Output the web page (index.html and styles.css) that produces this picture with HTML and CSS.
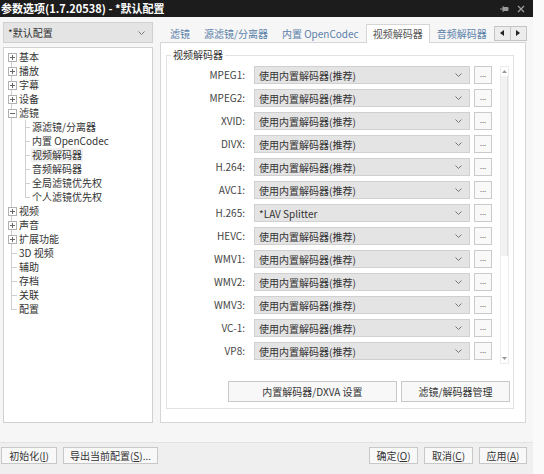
FILE: index.html
```html
<!DOCTYPE html>
<html lang="zh-CN">
<head>
    <meta charset="UTF-8">
    <meta name="viewport" content="width=device-width, initial-scale=1.0">
    <title>参数选项</title>
    <link rel="stylesheet" href="styles.css">
</head>
<body>
<div class="window">
    <div class="titlebar">
        <span class="title">参数选项(1.7.20538) - *默认配置</span>
        <span class="title-icons">
            <svg width="9" height="8" viewBox="0 0 9 8"><path d="M0 4h3M3 1v6M3 2.5h5v3H3" stroke="#9a9a9a" fill="#9a9a9a" stroke-width="1"/></svg>
            <svg width="8" height="8" viewBox="0 0 8 8"><path d="M1 1l6 6M7 1l-6 6" stroke="#a0a0a0" stroke-width="1.2"/></svg>
        </span>
    </div>

    <div class="main">
        <div class="sidebar">
            <div class="combo profile">
                <span>*默认配置</span>
                <svg width="7" height="4" viewBox="0 0 7 4"><path d="M0.5 0.5L3.5 3.5L6.5 0.5" stroke="#777" fill="none"/></svg>
            </div>
            <div class="tree">
                <div class="node first"><span class="gut exp"><svg width="9" height="9" viewBox="0 0 9 9"><rect x="0.5" y="0.5" width="8" height="8" fill="#fff" stroke="#b0b0b0"/><path d="M2 4.5h5M4.5 2v5" stroke="#666"/></svg></span>基本</div>
                <div class="node"><span class="gut exp"><svg width="9" height="9" viewBox="0 0 9 9"><rect x="0.5" y="0.5" width="8" height="8" fill="#fff" stroke="#b0b0b0"/><path d="M2 4.5h5M4.5 2v5" stroke="#666"/></svg></span>播放</div>
                <div class="node"><span class="gut exp"><svg width="9" height="9" viewBox="0 0 9 9"><rect x="0.5" y="0.5" width="8" height="8" fill="#fff" stroke="#b0b0b0"/><path d="M2 4.5h5M4.5 2v5" stroke="#666"/></svg></span>字幕</div>
                <div class="node"><span class="gut exp"><svg width="9" height="9" viewBox="0 0 9 9"><rect x="0.5" y="0.5" width="8" height="8" fill="#fff" stroke="#b0b0b0"/><path d="M2 4.5h5M4.5 2v5" stroke="#666"/></svg></span>设备</div>
                <div class="node"><span class="gut exp"><svg width="9" height="9" viewBox="0 0 9 9"><rect x="0.5" y="0.5" width="8" height="8" fill="#fff" stroke="#b0b0b0"/><path d="M2 4.5h5" stroke="#666"/></svg></span>滤镜</div>
                <div class="node"><span class="gut"></span><span class="gut2 cfirst"></span>源滤镜/分离器</div>
                <div class="node"><span class="gut"></span><span class="gut2"></span>内置 OpenCodec</div>
                <div class="node"><span class="gut"></span><span class="gut2"></span><span class="sel">视频解码器</span></div>
                <div class="node"><span class="gut"></span><span class="gut2"></span>音频解码器</div>
                <div class="node"><span class="gut"></span><span class="gut2"></span>全局滤镜优先权</div>
                <div class="node"><span class="gut"></span><span class="gut2 clast"></span>个人滤镜优先权</div>
                <div class="node"><span class="gut exp"><svg width="9" height="9" viewBox="0 0 9 9"><rect x="0.5" y="0.5" width="8" height="8" fill="#fff" stroke="#b0b0b0"/><path d="M2 4.5h5M4.5 2v5" stroke="#666"/></svg></span>视频</div>
                <div class="node"><span class="gut exp"><svg width="9" height="9" viewBox="0 0 9 9"><rect x="0.5" y="0.5" width="8" height="8" fill="#fff" stroke="#b0b0b0"/><path d="M2 4.5h5M4.5 2v5" stroke="#666"/></svg></span>声音</div>
                <div class="node"><span class="gut exp"><svg width="9" height="9" viewBox="0 0 9 9"><rect x="0.5" y="0.5" width="8" height="8" fill="#fff" stroke="#b0b0b0"/><path d="M2 4.5h5M4.5 2v5" stroke="#666"/></svg></span>扩展功能</div>
                <div class="node"><span class="gut tick"></span>3D 视频</div>
                <div class="node"><span class="gut tick"></span>辅助</div>
                <div class="node"><span class="gut tick"></span>存档</div>
                <div class="node"><span class="gut tick"></span>关联</div>
                <div class="node last"><span class="gut tick"></span>配置</div>
            </div>
        </div>

        <div class="content">
            <div class="tabs">
                <span class="tab">滤镜</span>
                <span class="tab">源滤镜/分离器</span>
                <span class="tab">内置 OpenCodec</span>
                <span class="tab active">视频解码器</span>
                <span class="tab">音频解码器</span>
                <span class="tab-scroll">
                    <span class="arrow-btn"><svg width="4" height="6" viewBox="0 0 4 6"><path d="M4 0v6L0 3z" fill="#222"/></svg></span>
                    <span class="arrow-btn"><svg width="4" height="6" viewBox="0 0 4 6"><path d="M0 0v6l4-3z" fill="#222"/></svg></span>
                </span>
            </div>
            <div class="panel">
                <fieldset class="group">
                    <legend>视频解码器</legend>
                    <div class="list">
                        <div class="rows">
                            <label>MPEG1:</label><div class="combo"><span>使用内置解码器(推荐)</span><svg width="7" height="4" viewBox="0 0 7 4"><path d="M0.5 0.5L3.5 3.5L6.5 0.5" stroke="#777" fill="none"/></svg></div><span class="more">...</span>
                            <label>MPEG2:</label><div class="combo"><span>使用内置解码器(推荐)</span><svg width="7" height="4" viewBox="0 0 7 4"><path d="M0.5 0.5L3.5 3.5L6.5 0.5" stroke="#777" fill="none"/></svg></div><span class="more">...</span>
                            <label>XVID:</label><div class="combo"><span>使用内置解码器(推荐)</span><svg width="7" height="4" viewBox="0 0 7 4"><path d="M0.5 0.5L3.5 3.5L6.5 0.5" stroke="#777" fill="none"/></svg></div><span class="more">...</span>
                            <label>DIVX:</label><div class="combo"><span>使用内置解码器(推荐)</span><svg width="7" height="4" viewBox="0 0 7 4"><path d="M0.5 0.5L3.5 3.5L6.5 0.5" stroke="#777" fill="none"/></svg></div><span class="more">...</span>
                            <label>H.264:</label><div class="combo"><span>使用内置解码器(推荐)</span><svg width="7" height="4" viewBox="0 0 7 4"><path d="M0.5 0.5L3.5 3.5L6.5 0.5" stroke="#777" fill="none"/></svg></div><span class="more">...</span>
                            <label>AVC1:</label><div class="combo"><span>使用内置解码器(推荐)</span><svg width="7" height="4" viewBox="0 0 7 4"><path d="M0.5 0.5L3.5 3.5L6.5 0.5" stroke="#777" fill="none"/></svg></div><span class="more">...</span>
                            <label>H.265:</label><div class="combo"><span>*LAV Splitter</span><svg width="7" height="4" viewBox="0 0 7 4"><path d="M0.5 0.5L3.5 3.5L6.5 0.5" stroke="#777" fill="none"/></svg></div><span class="more">...</span>
                            <label>HEVC:</label><div class="combo"><span>使用内置解码器(推荐)</span><svg width="7" height="4" viewBox="0 0 7 4"><path d="M0.5 0.5L3.5 3.5L6.5 0.5" stroke="#777" fill="none"/></svg></div><span class="more">...</span>
                            <label>WMV1:</label><div class="combo"><span>使用内置解码器(推荐)</span><svg width="7" height="4" viewBox="0 0 7 4"><path d="M0.5 0.5L3.5 3.5L6.5 0.5" stroke="#777" fill="none"/></svg></div><span class="more">...</span>
                            <label>WMV2:</label><div class="combo"><span>使用内置解码器(推荐)</span><svg width="7" height="4" viewBox="0 0 7 4"><path d="M0.5 0.5L3.5 3.5L6.5 0.5" stroke="#777" fill="none"/></svg></div><span class="more">...</span>
                            <label>WMV3:</label><div class="combo"><span>使用内置解码器(推荐)</span><svg width="7" height="4" viewBox="0 0 7 4"><path d="M0.5 0.5L3.5 3.5L6.5 0.5" stroke="#777" fill="none"/></svg></div><span class="more">...</span>
                            <label>VC-1:</label><div class="combo"><span>使用内置解码器(推荐)</span><svg width="7" height="4" viewBox="0 0 7 4"><path d="M0.5 0.5L3.5 3.5L6.5 0.5" stroke="#777" fill="none"/></svg></div><span class="more">...</span>
                            <label>VP8:</label><div class="combo"><span>使用内置解码器(推荐)</span><svg width="7" height="4" viewBox="0 0 7 4"><path d="M0.5 0.5L3.5 3.5L6.5 0.5" stroke="#777" fill="none"/></svg></div><span class="more">...</span>
                        </div>
                        <div class="vscroll">
                            <span class="sb-arrow"><svg width="5" height="3" viewBox="0 0 5 3"><path d="M0 3L2.5 0L5 3z" fill="#999"/></svg></span>
                            <span class="sb-thumb"></span>
                            <span class="sb-track"></span>
                            <span class="sb-arrow"><svg width="5" height="3" viewBox="0 0 5 3"><path d="M0 0L2.5 3L5 0z" fill="#999"/></svg></span>
                        </div>
                    </div>
                    <div class="group-actions">
                        <button class="btn wide">内置解码器/DXVA 设置</button>
                        <button class="btn mid">滤镜/解码器管理</button>
                    </div>
                </fieldset>
            </div>
        </div>
    </div>

    <div class="footer">
        <button class="btn w56">初始化(<u>I</u>)</button>
        <button class="btn w95">导出当前配置(<u>S</u>)...</button>
        <span class="spacer"></span>
        <button class="btn w49">确定(<u>O</u>)</button>
        <button class="btn w49">取消(<u>C</u>)</button>
        <button class="btn w48">应用(<u>A</u>)</button>
    </div>
</div>
</body>
</html>
```

FILE: styles.css
```css
body {
    margin: 0;
    background-color: #fafafa;
    font-family: "Noto Sans CJK SC", "Noto Sans", sans-serif;
    font-size: 10px;
    color: #333;
}
.window {
    width: 533px;
    height: 474px;
    display: flex;
    flex-direction: column;
    background-color: #f6f6f6;
}
.titlebar {
    height: 17px;
    flex: none;
    display: flex;
    align-items: center;
    justify-content: space-between;
    padding: 0 8px 0 1px;
    background-color: #1c1c1c;
    color: #fff;
}
.title {
    font-size: 11px;
    font-weight: bold;
    line-height: 17px;
}
.title-icons {
    display: flex;
    align-items: center;
    gap: 8px;
}
.main {
    flex: 1;
    min-height: 0;
    display: flex;
    gap: 7px;
    padding: 5px 7px 19px 3px;
}
.sidebar {
    width: 150px;
    display: flex;
    flex-direction: column;
    gap: 4px;
}
.combo {
    display: flex;
    align-items: center;
    justify-content: space-between;
    box-sizing: border-box;
    padding: 0 7px 0 4px;
    background-color: #e4e4e4;
    border: 1px solid #d0d0d0;
    color: #333;
    white-space: nowrap;
}
.profile {
    height: 21px;
    flex: none;
}

/* tree */
.tree {
    flex: 1;
    background-color: #fff;
    border: 1px solid #d0d0d0;
    padding-top: 2px;
    line-height: 14px;
    color: #333;
}
.node {
    display: flex;
    align-items: center;
    height: 14px;
    white-space: nowrap;
}
.gut, .gut2 {
    position: relative;
    flex: none;
    height: 14px;
}
.gut { width: 15px; }
.gut2 { width: 13px; }
.gut::before {
    content: "";
    position: absolute;
    left: 7px;
    top: 0;
    bottom: 0;
    border-left: 1px solid #cfcfcf;
}
.first .gut::before { top: 7px; }
.last .gut::before { bottom: 7px; }
.tick::after {
    content: "";
    position: absolute;
    left: 7px;
    top: 7px;
    width: 6px;
    border-top: 1px solid #cfcfcf;
}
.gut2::before {
    content: "";
    position: absolute;
    left: 6px;
    top: 0;
    bottom: 0;
    border-left: 1px solid #cfcfcf;
}
.gut2::after {
    content: "";
    position: absolute;
    left: 6px;
    top: 7px;
    width: 5px;
    border-top: 1px solid #cfcfcf;
}
.gut2.clast::before { bottom: 7px; }
.exp {
    display: flex;
    align-items: center;
    justify-content: center;
}
.exp svg {
    position: relative;
    margin-left: 1px;
}
.sel {
    background-color: #f1f1f1;
    padding: 0 1px;
    margin-left: -1px;
}

/* tabs */
.content {
    width: 366px;
    display: flex;
    flex-direction: column;
}
.tabs {
    height: 20px;
    flex: none;
    display: flex;
    align-items: flex-end;
    padding-left: 3px;
}
.tab {
    height: 17px;
    line-height: 17px;
    padding: 0 7px;
    color: #5a7fa9;
    white-space: nowrap;
}
.tab.active {
    position: relative;
    z-index: 1;
    height: 18px;
    margin-bottom: -1px;
    padding: 0 6px;
    background-color: #fff;
    border: 1px solid #d6d6d6;
    border-bottom: none;
    color: #555;
}
.tab-scroll {
    margin-left: auto;
    align-self: center;
    display: flex;
    margin-top: 2px;
}
.arrow-btn {
    width: 15px;
    height: 13px;
    display: flex;
    align-items: center;
    justify-content: center;
    background-color: #ececec;
    border: 1px solid #c4c4c4;
}
.arrow-btn + .arrow-btn { border-left: none; }
.panel {
    flex: 1;
    background-color: #fff;
    border: 1px solid #d6d6d6;
}

/* group box */
.group {
    width: 348px;
    box-sizing: border-box;
    margin: 5px 0 0 5px;
    padding: 4px 0 6px 0;
    border: 1px solid #e2e2e2;
    min-width: 0;
}
.group legend {
    margin-left: 4px;
    padding: 0 2px;
    line-height: 14px;
    color: #333;
}
.list {
    display: flex;
    align-items: flex-start;
}
.rows {
    display: grid;
    grid-template-columns: 83px 216px 18px;
    grid-auto-rows: 18px;
    column-gap: 4px;
    row-gap: 5px;
}
.rows label {
    text-align: right;
    line-height: 18px;
    padding-right: 5px;
    color: #444;
}
.more {
    box-sizing: border-box;
    height: 18px;
    line-height: 13px;
    text-align: center;
    background-color: #f9f9f9;
    border: 1px solid #cacaca;
    color: #666;
    font-size: 8px;
}
.vscroll {
    width: 7px;
    height: 296px;
    margin-left: 8px;
    display: flex;
    flex-direction: column;
    border: 1px solid #ececec;
}
.sb-arrow {
    height: 9px;
    flex: none;
    display: flex;
    align-items: center;
    justify-content: center;
}
.sb-thumb {
    height: 180px;
    flex: none;
    background-color: #f2f2f2;
    border-right: 1px solid #e0e0e0;
}
.sb-track { flex: 1; }
.group-actions {
    display: flex;
    justify-content: flex-end;
    gap: 4px;
    margin-top: 17px;
    padding-right: 3px;
}

/* buttons */
.btn {
    box-sizing: border-box;
    height: 17px;
    padding: 0;
    font: inherit;
    color: #333;
    background-color: #f8f8f8;
    border: 1px solid #c8c8c8;
    border-radius: 0;
    white-space: nowrap;
}
.btn u { text-underline-offset: 1px; }
.wide { width: 169px; height: 21px; }
.mid { width: 109px; height: 21px; }
.w56 { width: 56px; }
.w95 { width: 95px; }
.w49 { width: 49px; }
.w48 { width: 48px; }
.footer {
    height: 32px;
    flex: none;
    box-sizing: border-box;
    display: flex;
    align-items: flex-start;
    gap: 6px;
    padding: 4px 6px 0 1px;
    background-color: #efefef;
    border-top: 1px solid #e3e3e3;
}
.footer .spacer { flex: 1; }
```
